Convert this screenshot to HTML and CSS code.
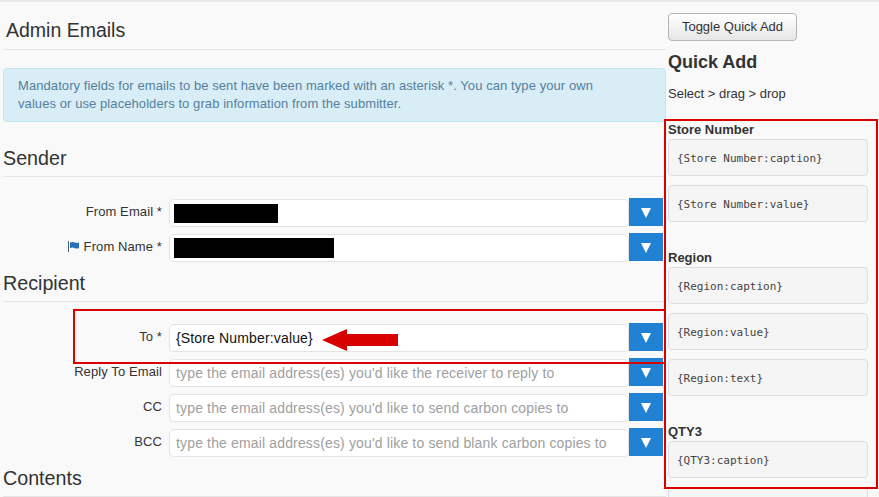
FILE: index.html
```html
<!DOCTYPE html>
<html lang="en">
<head>
<meta charset="utf-8">
<title>Admin Emails</title>
<link rel="stylesheet" href="styles.css">
</head>
<body>
<div class="page">
  <main class="main">
    <h1 class="title">Admin Emails</h1>
    <div class="alert">Mandatory fields for emails to be sent have been marked with an asterisk *. You can type your own<br>values or use placeholders to grab information from the submitter.</div>
    <h2 class="legend legend-sender">Sender</h2>
    <div class="rows">
      <div class="row">
        <label class="label">From Email *</label>
        <div class="field"></div>
        <button class="drop"><span class="tri"></span></button>
      </div>
      <div class="row">
        <label class="label"><svg class="flag" width="12" height="11" viewBox="0 0 12 11"><path d="M0.5 0v11" stroke="#44607a" stroke-width="1"/><path d="M2 1.500c2-1 3.500-.6 5 0s3 .5 4-.2v5.700c-1 .7-2.500.8-4 .2s-3-1-5 0z" fill="#2a6fb5"/></svg> From Name *</label>
        <div class="field"></div>
        <button class="drop"><span class="tri"></span></button>
      </div>
    </div>
    <h2 class="legend legend-recipient">Recipient</h2>
    <div class="rows">
      <div class="row">
        <label class="label">To *</label>
        <div class="field field-value">{Store Number:value}</div>
        <button class="drop"><span class="tri"></span></button>
      </div>
      <div class="row">
        <label class="label">Reply To Email</label>
        <div class="field field-hint">type the email address(es) you'd like the receiver to reply to</div>
        <button class="drop"><span class="tri"></span></button>
      </div>
      <div class="row">
        <label class="label">CC</label>
        <div class="field field-hint">type the email address(es) you'd like to send carbon copies to</div>
        <button class="drop"><span class="tri"></span></button>
      </div>
      <div class="row">
        <label class="label">BCC</label>
        <div class="field field-hint">type the email address(es) you'd like to send blank carbon copies to</div>
        <button class="drop"><span class="tri"></span></button>
      </div>
    </div>
    <h2 class="legend legend-contents">Contents</h2>
  </main>
  <aside class="side">
    <button class="toggle">Toggle Quick Add</button>
    <h3 class="side-title">Quick Add</h3>
    <p class="side-hint">Select &gt; drag &gt; drop</p>
    <section class="group group-first">
      <h4 class="group-name">Store Number</h4>
      <code class="tag">{Store Number:caption}</code>
      <code class="tag">{Store Number:value}</code>
    </section>
    <section class="group">
      <h4 class="group-name">Region</h4>
      <code class="tag">{Region:caption}</code>
      <code class="tag">{Region:value}</code>
      <code class="tag">{Region:text}</code>
    </section>
    <section class="group">
      <h4 class="group-name">QTY3</h4>
      <code class="tag">{QTY3:caption}</code>
      <div class="tag"></div>
    </section>
  </aside>
</div>
<div class="redact redact-email"></div>
<div class="redact redact-name"></div>
<div class="mark mark-to"></div>
<div class="mark mark-side"></div>
<svg class="arrow" width="76" height="22" viewBox="0 0 76 22"><path d="M0 11L25 0v5h51v12H25v5z" fill="#d90000"/></svg>
</body>
</html>
```
FILE: styles.css
```css
* { box-sizing: border-box; }
html, body { margin: 0; height: 497px; overflow: hidden; }
body {
  position: relative;
  background: #f9f9f9;
  color: #333;
  font-family: "Liberation Sans", Arial, sans-serif;
  font-size: 13px;
}
.page {
  display: flex;
  align-items: flex-start;
  gap: 2px;
  padding: 0 0 0 3px;
  height: 497px;
  overflow: hidden;
  border-top: 2px solid #e8e8e8;
}
.main { width: 663px; flex: none; }
.title {
  margin: 0;
  height: 48px;
  padding: 16px 0 0 3px;
  font-size: 19.500px;
  font-weight: 400;
  line-height: 24px;
  border-bottom: 1px solid #e5e5e5;
}
.alert {
  margin-top: 18px;
  height: 54px;
  padding: 8px 14px 0;
  background: #d9edf7;
  border: 1px solid #bce8f1;
  border-radius: 4px;
  color: #55809c;
  font-size: 13px;
  letter-spacing: 0.080px;
  line-height: 18px;
}
.legend {
  margin: 0;
  height: 31px;
  font-size: 19.700px;
  font-weight: 400;
  line-height: 24px;
  border-bottom: 1px solid #e5e5e5;
}
.legend-sender { margin-top: 24px; }
.legend-recipient { margin-top: 9px; }
.legend-contents { margin-top: 9px; }
.rows { display: flex; flex-direction: column; gap: 7px; margin-top: 22px; }
.row { display: flex; align-items: flex-start; height: 28px; }
.label {
  width: 159px;
  flex: none;
  padding-top: 5px;
  text-align: right;
  font-size: 13px;
  letter-spacing: 0.100px;
  line-height: 16px;
}
.flag { vertical-align: -1px; }
.field {
  width: 460px;
  flex: none;
  margin-left: 7px;
  height: 28px;
  padding: 0 6px;
  background: #fff;
  border: 1px solid #e3e3e3;
  border-radius: 5px;
  font-size: 14px;
  letter-spacing: 0.150px;
  line-height: 27px;
  white-space: nowrap;
  overflow: hidden;
}
.field-value { color: #111; }
.field-hint { color: #a0a0a0; }
.drop {
  width: 34px;
  height: 28px;
  flex: none;
  margin-top: -1px;
  padding: 2px 0 0;
  background: #2182d3;
  border: 0;
  display: flex;
  align-items: center;
  justify-content: center;
}
.tri {
  width: 0;
  height: 0;
  border-left: 5px solid transparent;
  border-right: 5px solid transparent;
  border-top: 10px solid #fff;
}
.side { width: 200px; flex: none; }
.toggle {
  display: block;
  margin-top: 11px;
  width: 129px;
  height: 28px;
  padding: 0 0 2px;
  background: linear-gradient(#fff, #e6e6e6);
  border: 1px solid #b5b5b5;
  border-radius: 4px;
  color: #333;
  font-family: inherit;
  font-size: 13px;
}
.side-title {
  margin: 10px 0 0;
  font-size: 18px;
  line-height: 22px;
  font-weight: 700;
}
.side-hint {
  margin: 12px 0 0;
  font-size: 13px;
  line-height: 18px;
}
.group { margin-top: 27px; }
.group-first { margin-top: 18px; }
.group-name {
  margin: 0;
  font-size: 13px;
  font-weight: 700;
  line-height: 18px;
}
.tag {
  display: block;
  height: 37px;
  margin-bottom: 9px;
  padding: 0 8px;
  background: #f5f5f5;
  border: 1px solid #ddd;
  border-radius: 4px;
  color: #444;
  font-family: "DejaVu Sans Mono", "Liberation Mono", monospace;
  font-size: 11px;
  line-height: 37px;
}
.redact { position: absolute; left: 174px; background: #000; }
.redact-email { top: 204px; width: 104px; height: 19px; }
.redact-name { top: 238px; width: 160px; height: 20px; }
.mark { position: absolute; border: 2px solid #d90000; }
.mark-to { left: 73px; top: 309px; width: 591px; height: 55px; border-right: 0; }
.mark-side { left: 664px; top: 119px; width: 214px; height: 370px; }
.arrow { position: absolute; left: 322px; top: 329px; }
```
